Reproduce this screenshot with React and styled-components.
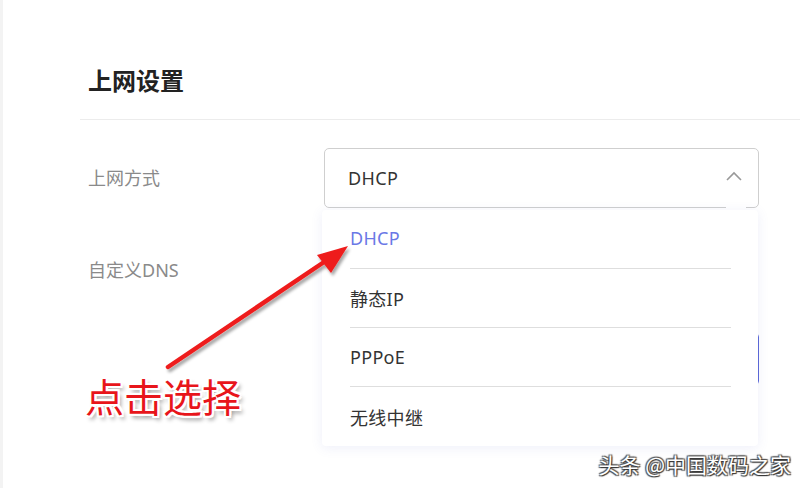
import React from "react";
import styled, { createGlobalStyle } from "styled-components";

const GlobalStyle = createGlobalStyle`
  html, body {
    margin: 0;
    padding: 0;
    background: #fff;
  }
  body {
    font-family: "Noto Sans", "Noto Sans CJK SC", sans-serif;
  }
`;

const options = ["DHCP", "静态IP", "PPPoE", "无线中继"];

export default function App() {
  return (
    <>
      <GlobalStyle />
      <Page>
        <Header>
          <Title>上网设置</Title>
        </Header>
        <Form>
          <Row>
            <Label>上网方式</Label>
            <Select>
              <SelectValue>DHCP</SelectValue>
              <Chevron width="16" height="10" viewBox="0 0 16 10">
                <polyline points="1,9 8,2 15,9" />
              </Chevron>
              <Notch />
              <Dropdown>
                {options.map((opt, i) => (
                  <Option key={opt}>
                    <OptionText $last={i === options.length - 1} $active={i === 0}>
                      {opt}
                    </OptionText>
                  </Option>
                ))}
              </Dropdown>
            </Select>
          </Row>
          <Row $top={36}>
            <Label>自定义DNS</Label>
          </Row>
          <Row $top={37}>
            <Label />
            <DnsInput />
          </Row>
        </Form>

        <ArrowSvg width="800" height="488" viewBox="0 0 800 488">
          <defs>
            <filter id="sh" x="-10%" y="-10%" width="130%" height="130%">
              <feDropShadow dx="2" dy="3" stdDeviation="1.5" floodColor="#000" floodOpacity="0.35" />
            </filter>
          </defs>
          <g filter="url(#sh)">
            <line x1="168" y1="367" x2="330" y2="258" stroke="#ee1c1c" strokeWidth="4.5" strokeLinecap="round" />
            <polygon points="348,246 317,255 331,273" fill="#ee1c1c" />
          </g>
        </ArrowSvg>
        <Callout>点击选择</Callout>
        <Watermark>头条 @中国数码之家</Watermark>
      </Page>
    </>
  );
}

const Page = styled.div`
  position: relative;
  width: 800px;
  height: 488px;
  overflow: hidden;
  box-sizing: border-box;
  border-left: 3px solid #f3f3f3;
  background: #fff;
`;

const Header = styled.div`
  margin-left: 77px;
  padding: 66px 0 26px 8px;
  border-bottom: 1px solid #ececec;
`;

const Title = styled.div`
  font-family: "Noto Sans CJK SC", sans-serif;
  font-size: 24px;
  line-height: 27px;
  font-weight: 700;
  color: #222;
`;

const Form = styled.div`
  padding-left: 85px;
  padding-top: 28px;
`;

const Row = styled.div`
  display: flex;
  align-items: center;
  margin-top: ${(p) => (p.$top ? `${p.$top}px` : "0")};
  min-height: 52px;
`;

const Label = styled.div`
  width: 236px;
  font-size: 18px;
  color: #8a8a8a;
  margin-top: -3px;
`;

const Select = styled.div`
  position: relative;
  width: 435px;
  height: 60px;
  box-sizing: border-box;
  border: 1px solid #cfcfcf;
  border-radius: 5px;
  display: flex;
  align-items: center;
  justify-content: space-between;
  padding: 0 16px 0 23px;
  z-index: 2;
`;

const SelectValue = styled.span`
  font-size: 18px;
  letter-spacing: 0.4px;
  color: #333;
`;

const Chevron = styled.svg`
  fill: none;
  stroke: #999;
  stroke-width: 1.6;
  margin-top: -4px;
`;

const Notch = styled.div`
  position: absolute;
  right: 12px;
  bottom: -4px;
  width: 20px;
  height: 6px;
  background: #fff;
`;

const Dropdown = styled.div`
  position: absolute;
  top: 61px;
  left: -3px;
  width: 436px;
  background: #fff;
  box-shadow: 0 2px 12px rgba(90, 100, 200, 0.1);
  border-radius: 4px;
`;

const Option = styled.div`
  height: 59px;
  padding: 0 27px 0 28px;
  display: flex;
`;

const OptionText = styled.div`
  flex: 1;
  display: flex;
  align-items: center;
  font-size: 18px;
  letter-spacing: 0.3px;
  color: ${(p) => (p.$active ? "#6a78e6" : "#333")};
  border-bottom: ${(p) => (p.$last ? "none" : "1px solid #dedede")};
  padding-bottom: ${(p) => (p.$active ? "3px" : "0")};
`;

const DnsInput = styled.div`
  width: 435px;
  height: 52px;
  box-sizing: border-box;
  border: 1px solid #5b68d8;
  border-radius: 4px;
`;

const ArrowSvg = styled.svg`
  position: absolute;
  left: -3px;
  top: 0;
  z-index: 3;
  pointer-events: none;
`;

const Callout = styled.div`
  position: absolute;
  left: 82px;
  top: 370px;
  z-index: 4;
  font-family: "Noto Sans CJK SC", sans-serif;
  font-size: 39px;
  line-height: 50px;
  color: #e8151b;
  text-shadow:
    -2px -2px 0 #fff, 2px -2px 0 #fff, -2px 2px 0 #fff, 2px 2px 0 #fff,
    0 -2px 0 #fff, 0 2px 0 #fff, -2px 0 0 #fff, 2px 0 0 #fff,
    3px 4px 4px rgba(0, 0, 0, 0.45);
`;

const Watermark = styled.div`
  position: absolute;
  right: 9px;
  bottom: 12px;
  z-index: 4;
  font-family: "Noto Sans CJK SC", sans-serif;
  font-size: 21px;
  line-height: 24px;
  color: #fff;
  text-shadow: 1px 1px 1px #333, -1px -1px 1px #555, 1px -1px 1px #555, -1px 1px 1px #555;
`;
